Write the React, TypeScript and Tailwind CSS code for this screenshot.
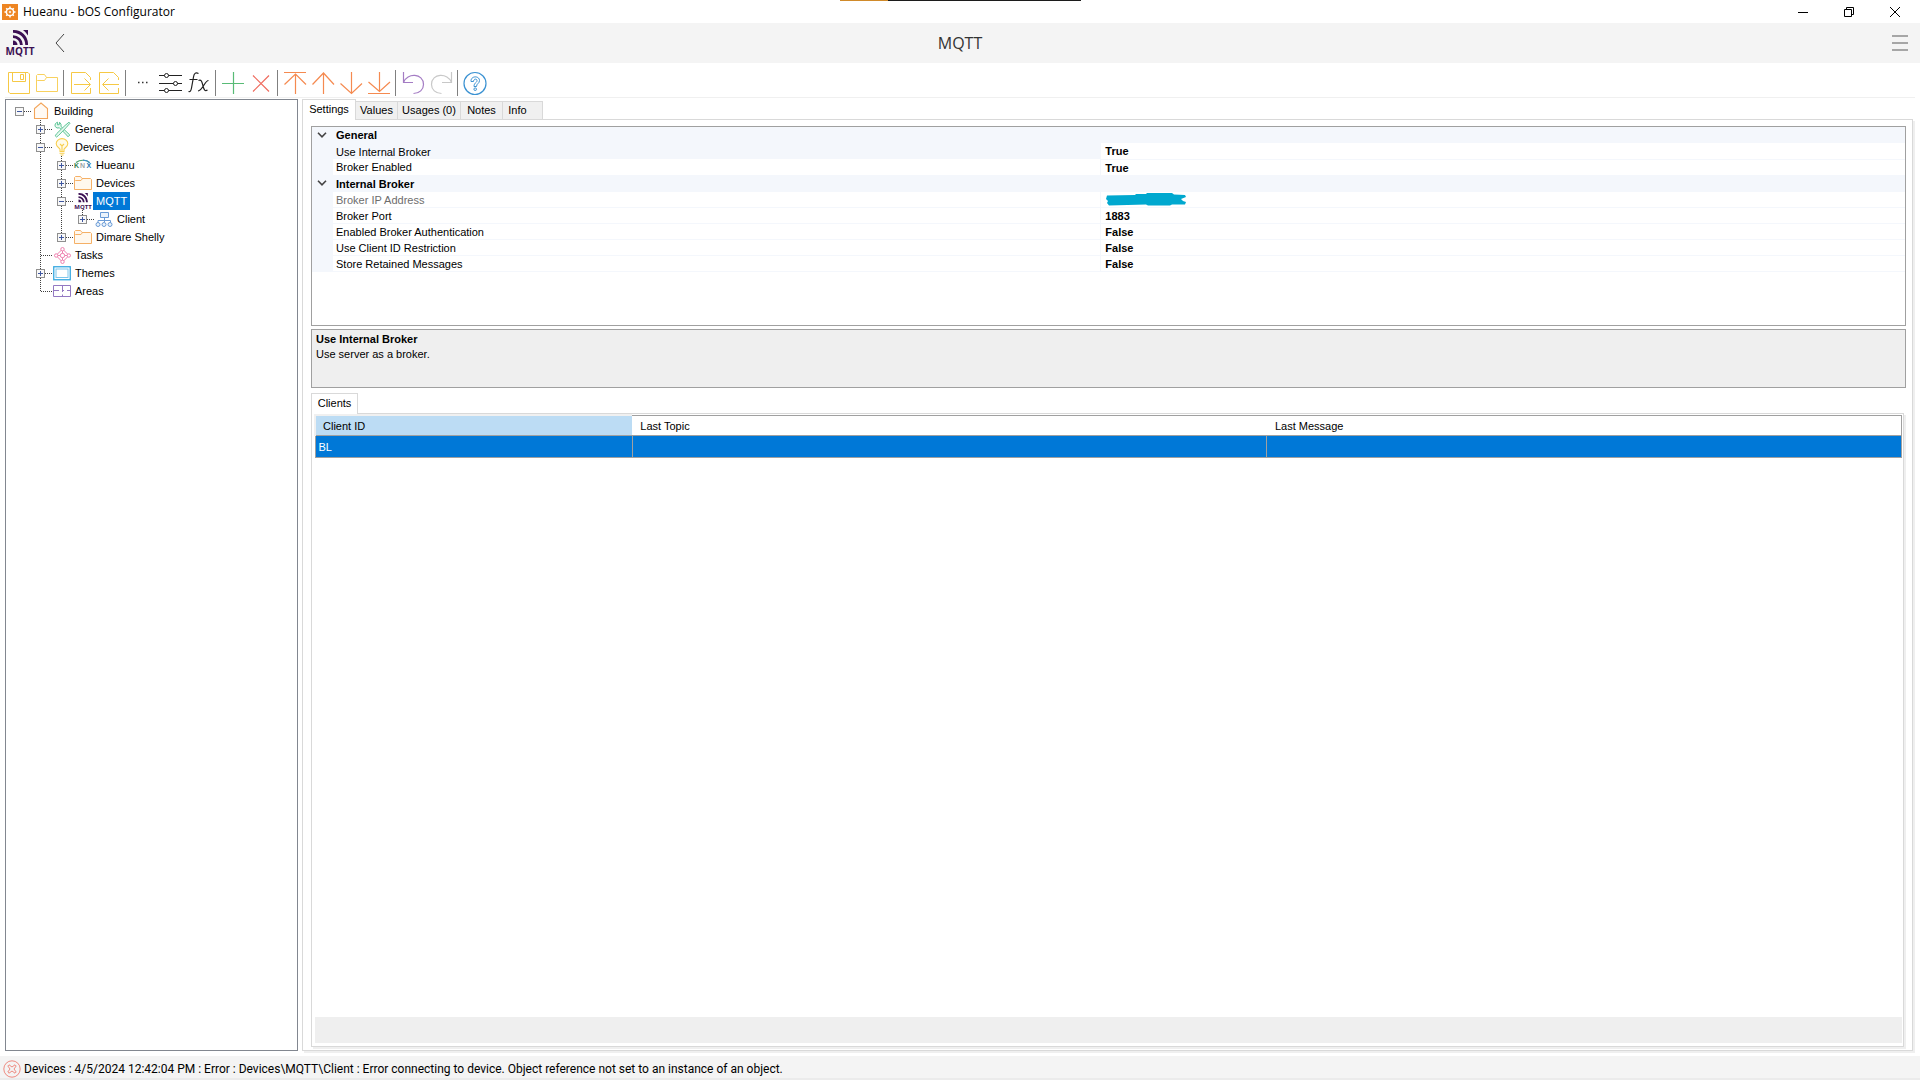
import React from "react";

type Link = "none" | "line" | "tee" | "ell" | "root";

type Node = {
  label: string;
  icon: React.ReactNode;
  links: Link[];
  box?: "+" | "-";
  selected?: boolean;
};

const MqttMark = () => (
  <g fill="#3c1053">
    <path d="M0 10.5A4.5 4.5 0 0 1 4.5 15H0z" />
    <path d="M0 5.2A9.8 9.8 0 0 1 9.8 15H7A7 7 0 0 0 0 8z" />
    <path d="M0 0H1A14 14 0 0 1 15 13.500V15H12.300A12.300 12.300 0 0 0 0 2.700z" />
    <path d="M10 0H15V5.500A18 18 0 0 0 10 0z" />
  </g>
);

const FolderIcon = () => (
  <svg viewBox="0 0 18 16" className="h-4 w-[18px]" fill="#fff8ee" stroke="#f5b066">
    <path d="M.5 14.500V2.500L1.500 1.500H6.500L8 3.500H16.500L17.500 4.500V14.500z" />
    <path d="M.5 6.500L1.500 5.500H7L8.500 3.500" fill="none" />
  </svg>
);

const HouseIcon = () => (
  <svg viewBox="0 0 16 18" className="h-[18px] w-4" fill="#fffaf4" stroke="#f3a55a" strokeWidth="1.1">
    <path d="M1.500 16.500V6.500L8 1L14.500 6.500V16.500z" />
  </svg>
);

const ToolsIcon = () => (
  <svg viewBox="0 0 17 17" className="size-[17px]" fill="#e9f8f0" stroke="#5cc596">
    <path d="M3.500 1.200A3.300 3.300 0 0 0 1.200 5.500L3 7L5.500 6.800L12.500 14L14 15.800L15.800 14L7 5.500L7 3.200L5.500 1.200L5.300 3.500L3.700 4z" />
    <path d="M15 1.200L16 2.200L12.500 6.200L4.500 14.500L2.500 16L1.200 14.800L2.800 12.500L11 4.500z" />
  </svg>
);

const BulbIcon = () => (
  <svg viewBox="0 0 14 18" className="h-[18px] w-3.5" fill="#fffbe9" stroke="#f8cf4f" strokeWidth="1.1">
    <path d="M5 13V11.500C5 10 1.200 9 1.200 5.800A5.800 5.200 0 0 1 12.800 5.800C12.800 9 9 10 9 11.500V13" />
    <path d="M4.500 13.500H9.500M4.500 15.200H9.500M5.500 17H8.500M5 6L7 8L9 6M7 8V13" />
  </svg>
);

const KnxIcon = () => (
  <svg viewBox="0 0 18 12" className="h-3 w-[18px]">
    <path d="M2 3.500C6 .5 12 .5 15.500 3.500" fill="none" stroke="#4aa06c" strokeWidth="1.200" />
    <path d="M9 1.200C12 1.200 14 2 15.800 3.800" fill="none" stroke="#3d8ecb" strokeWidth="1.200" />
    <g fontFamily="Liberation Sans, sans-serif" fontWeight="700" fontSize="7">
      <text x="0" y="9" fill="#37814f">K</text>
      <text x="6" y="9" fill="#9aa5a8">N</text>
      <text x="12.500" y="9" fill="#2676b0">X</text>
    </g>
  </svg>
);

const MqttIcon = () => (
  <svg viewBox="0 0 18 17" className="h-[17px] w-[18px]">
    <g transform="translate(4.500 0) scale(.62)">
      <MqttMark />
    </g>
    <text x="9" y="16" textAnchor="middle" fill="#3c1053" fontFamily="Open Sans, sans-serif" fontWeight="700" fontSize="6">
      MQTT
    </text>
  </svg>
);

const ClientIcon = () => (
  <svg viewBox="0 0 18 17" className="h-[17px] w-[18px]" fill="#eaf3fc" stroke="#6a9bd6">
    <path d="M5.500 1.500H13.500V6.500H5.500z" />
    <path d="M9.500 6.500V11M3 12V9.500H15.500V12" fill="none" />
    <circle cx="3" cy="13.500" r="2" />
    <circle cx="9" cy="13.500" r="2" />
    <circle cx="15" cy="13.500" r="2" />
  </svg>
);

const TasksIcon = () => (
  <svg viewBox="0 0 17 17" className="size-[17px]" fill="#fff" stroke="#ee7fae">
    <path d="M8.500 2L15 8.500L8.500 15L2 8.500z" fill="none" />
    <path d="M8.500 2V15M2 8.500H15" />
    <circle cx="8.500" cy="2.200" r="1.700" />
    <circle cx="8.500" cy="14.800" r="1.700" />
    <circle cx="2.200" cy="8.500" r="1.700" />
    <circle cx="14.800" cy="8.500" r="1.700" />
    <circle cx="8.500" cy="8.500" r="2.200" />
  </svg>
);

const ThemesIcon = () => (
  <svg viewBox="0 0 18 15" className="h-[15px] w-[18px]" fill="#fff">
    <rect x=".75" y=".75" width="16.500" height="13" stroke="#35a8e0" strokeWidth="1.300" />
    <rect x="3" y="3" width="12" height="8.500" stroke="#7cc6ec" />
  </svg>
);

const AreasIcon = () => (
  <svg viewBox="0 0 18 14" className="h-3.5 w-[18px]" fill="none" stroke="#9379c2">
    <path d="M.5 1.500H17.500V12.500H.5zM.5 6.500H6M9.500 1.500V8M9.500 10.500V12.500M9.500 6.500H11M14 6.500H17.500" />
  </svg>
);

const tree: Node[] = [
  { label: "Building", icon: <HouseIcon />, links: ["root"], box: "-" },
  { label: "General", icon: <ToolsIcon />, links: ["none", "tee"], box: "+" },
  { label: "Devices", icon: <BulbIcon />, links: ["none", "tee"], box: "-" },
  { label: "Hueanu", icon: <KnxIcon />, links: ["none", "line", "tee"], box: "+" },
  { label: "Devices", icon: <FolderIcon />, links: ["none", "line", "tee"], box: "+" },
  { label: "MQTT", icon: <MqttIcon />, links: ["none", "line", "tee"], box: "-", selected: true },
  { label: "Client", icon: <ClientIcon />, links: ["none", "line", "line", "ell"], box: "+" },
  { label: "Dimare Shelly", icon: <FolderIcon />, links: ["none", "line", "ell"], box: "+" },
  { label: "Tasks", icon: <TasksIcon />, links: ["none", "tee"] },
  { label: "Themes", icon: <ThemesIcon />, links: ["none", "tee"], box: "+" },
  { label: "Areas", icon: <AreasIcon />, links: ["none", "ell"] },
];

function Branch({ link, box }: { link: Link; box?: "+" | "-" }) {
  return (
    <svg viewBox="0 0 21 18" className="h-[18px] w-[21px] shrink-0" shapeRendering="crispEdges">
      <g stroke="#404040" strokeDasharray="1 1" fill="none">
        {(link === "line" || link === "tee") && <path d="M9.500 0V18" />}
        {link === "ell" && <path d="M9.500 0V9" />}
        {link !== "line" && link !== "none" && <path d="M10 9.500H21" />}
      </g>
      {box && (
        <g>
          <rect x="5.500" y="5.500" width="8" height="8" fill="#f8f8f8" stroke="#8f8f8f" />
          <path d={box === "+" ? "M7 9.500H12M9.500 7V12" : "M7 9.500H12"} stroke="#3f57a0" />
        </g>
      )}
    </svg>
  );
}

function Tree() {
  return (
    <ul className="w-[293px] shrink-0 border border-[#828790] bg-white pt-0.5 pl-1">
      {tree.map((node, i) => (
        <li key={i} className="flex h-[18px] items-center">
          {node.links.map((link, j) => (
            <Branch key={j} link={link} box={j === node.links.length - 1 ? node.box : undefined} />
          ))}
          <span className="flex w-5 shrink-0 justify-center">{node.icon}</span>
          <button
            className={
              node.selected
                ? "h-[18px] bg-[#0078d7] px-[3px] text-white"
                : "h-[18px] px-[3px]"
            }
          >
            {node.label}
          </button>
        </li>
      ))}
    </ul>
  );
}

const tools: { name: string; color: string; art: React.ReactNode }[][] = [
  [
    {
      name: "Save",
      color: "#f6c945",
      art: (
        <>
          <path d="M3.500 3.500H23L24.500 5V24.500H5L3.500 23z" />
          <path d="M7.500 3.500V12.500H20.500V3.500M15.500 5.500H18.500V10.500H15.500z" />
        </>
      ),
    },
    {
      name: "Open",
      color: "#f8d15e",
      art: <path d="M3.500 22.500V6.500L4.500 5.500H11.500L13.500 8.500H24.500V22.500zM3.500 12.500L4.500 11.500H11.500L13.500 8.500H24" />,
    },
  ],
  [
    {
      name: "Export",
      color: "#f6c945",
      art: <path d="M23.500 11V8.500L18.500 3.500H4.500V24.500H23.500V19M7 15.500H23M17.500 9.500L23.500 15.500L17.500 21.500" />,
    },
    {
      name: "Import",
      color: "#f6c945",
      art: <path d="M23.500 11V8.500L18.500 3.500H4.500V24.500H23.500V19M8 15.500H24M13.500 9.500L7.500 15.500L13.500 21.500" />,
    },
  ],
  [
    {
      name: "More",
      color: "#333",
      art: <path d="M9 13.500H10.500M13 13.500H14.500M17 13.500H18.500" strokeWidth="1.500" />,
    },
    {
      name: "Parameters",
      color: "#222",
      art: (
        <>
          <path d="M2 6.500H7.500M11.500 6.500H25M2 14.500H16.500M20.500 14.500H25M2 21.500H7.500M11.500 21.500H25" />
          <circle cx="9.500" cy="6.500" r="2" />
          <circle cx="18.500" cy="14.500" r="2" />
          <circle cx="9.500" cy="21.500" r="2" />
        </>
      ),
    },
    {
      name: "Function",
      color: "#222",
      art: (
        <g strokeWidth="1.200">
          <path d="M13.500 4.500C10.500 3 9 4.500 8.500 8L6.500 19C6 22 5 23 3.500 22.500M4.500 10.500H12.500" />
          <path d="M13.500 11.500C16.500 10 17 13 18 17C19 21 20 22.500 22.500 21M23.500 11.500C20 11.500 17.500 21.500 13 22" />
        </g>
      ),
    },
  ],
  [
    { name: "Add", color: "#58bb76", art: <path d="M14.500 3V25M3 14.500H25" strokeWidth="1.200" /> },
    { name: "Delete", color: "#ef6b5e", art: <path d="M6 6.500L22 22.500M22 6.500L6 22.500" strokeWidth="1.200" /> },
  ],
  [
    { name: "Move to top", color: "#f58a50", art: <path d="M3 3.500H25M14.500 5V25M3.500 15.500L14.500 5L25 15.500" strokeWidth="1.200" /> },
    { name: "Move up", color: "#f58a50", art: <path d="M14.500 4V25M3.500 15.500L14.500 4L25 15.500" strokeWidth="1.200" /> },
    { name: "Move down", color: "#f58a50", art: <path d="M14.500 3V24.500M3.500 14.500L14.500 24.500L25 14.500" strokeWidth="1.200" /> },
    { name: "Move to bottom", color: "#f58a50", art: <path d="M3 24.500H25M14.500 3V22.500M3.500 13L14.500 22.500L25 13" strokeWidth="1.200" /> },
  ],
  [
    { name: "Undo", color: "#a47cc4", art: <path d="M4.500 3V13.500H14M4.500 13.500C8 3.500 24.500 4 24.500 15.500C24.500 20.500 20.500 24.500 14.500 24.500" strokeWidth="1.200" /> },
    { name: "Redo", color: "#c8c8c8", art: <path d="M24.500 3V13.500H15M24.500 13.500C21 3.500 4.500 4 4.500 15.500C4.500 20.500 8.500 24.500 14.500 24.500" strokeWidth="1.200" /> },
  ],
  [
    {
      name: "Help",
      color: "#3b92d2",
      art: (
        <>
          <circle cx="14" cy="14.500" r="11" strokeWidth="1.200" />
          <path d="M10 12.500C9.500 6.500 18.500 6.500 18.500 11.500C18.500 14.500 15.500 14.500 15.500 17.500H13C13 13.500 16 14 16 11.500C16 9.500 12.500 9.500 12.500 12.500z" />
          <circle cx="14.200" cy="20.200" r="1.300" />
        </>
      ),
    },
  ],
];

function Toolbar() {
  return (
    <div className="mx-[5px] flex h-[35px] border-b border-[#f0f0f0] pt-1.5">
      {tools.map((group, i) => (
        <div key={i} className="flex">
          {i > 0 && <span className="mt-px mr-[3px] ml-0.5 h-[26px] w-px bg-[#808080]" />}
          {group.map((tool) => (
            <button key={tool.name} aria-label={tool.name} className="size-7">
              <svg viewBox="0 0 28 28" className="size-7" fill="none" stroke={tool.color}>
                {tool.art}
              </svg>
            </button>
          ))}
        </div>
      ))}
    </div>
  );
}

const tabs = ["Values", "Usages (0)", "Notes", "Info"];
const tabWidths = ["w-[42px]", "w-[63px]", "w-[42px]", "w-[40px]"];

const settings = [
  {
    title: "General",
    rows: [
      { name: "Use Internal Broker", value: "True", active: true },
      { name: "Broker Enabled", value: "True" },
    ],
  },
  {
    title: "Internal Broker",
    rows: [
      { name: "Broker IP Address", value: "", readOnly: true },
      { name: "Broker Port", value: "1883" },
      { name: "Enabled Broker Authentication", value: "False" },
      { name: "Use Client ID Restriction", value: "False" },
      { name: "Store Retained Messages", value: "False" },
    ],
  },
];

const Scribble = () => (
  <svg viewBox="0 0 80 13" className="h-[13px] w-20" fill="#00a8cf">
    <path d="M1 2.500L29 2L30 1L40 1L41 0H66L68 1.500L79 2L80 4L75 6L77 8L80 9L79 11.500L66 11.500L64 12.500H42L40 11.500L3 12.500L1 10L2 8L0 6z" />
  </svg>
);

function PropertyGrid() {
  return (
    <div className="h-[200px] border border-[#a0a0a0] bg-white">
      <table className="w-full table-fixed border-collapse text-left">
        <colgroup>
          <col className="w-[21px]" />
          <col className="w-[48.2%]" />
          <col />
        </colgroup>
        {settings.map((group) => (
          <tbody key={group.title}>
            <tr className="h-4 bg-[#f4f7fc]">
              <td>
                <svg viewBox="0 0 10 6" className="ml-[5px] h-1.5 w-2.5" fill="none" stroke="#444" strokeWidth="1.600">
                  <path d="M1 .8L5 4.800L9 .8" />
                </svg>
              </td>
              <th colSpan={2} className="pl-[3px] leading-4 font-bold">
                {group.title}
              </th>
            </tr>
            {group.rows.map((row) => (
              <tr key={row.name} className="h-4">
                <td className="bg-[#f4f7fc]" />
                <td
                  className={
                    row.active
                      ? "bg-[#f4f7fc] pt-0.5 pl-[3px] leading-[14px]"
                      : row.readOnly
                        ? "border-b border-[#f4f7fc] pt-0.5 pl-[3px] leading-[13px] text-[#6d6d6d]"
                        : "border-b border-[#f4f7fc] pt-0.5 pl-[3px] leading-[13px]"
                  }
                >
                  {row.name}
                </td>
                <td
                  className={
                    row.readOnly
                      ? "border-b border-l border-[#f4f7fc] pl-[5px]"
                      : "border-b border-l border-[#f4f7fc] pt-0.5 pl-1 leading-[13px] font-bold"
                  }
                >
                  {row.readOnly ? <Scribble /> : row.value}
                </td>
              </tr>
            ))}
          </tbody>
        ))}
      </table>
    </div>
  );
}

function Clients() {
  return (
    <div className="mt-[5px] flex grow flex-col">
      <div className="z-10 -mb-px flex">
        <button className="h-[21px] w-[47px] border border-b-0 border-[#d9d9d9] bg-white pb-0.5">Clients</button>
      </div>
      <div className="mr-0.5 flex grow flex-col border border-[#d9d9d9] bg-white pr-px pb-[3px] pl-0.5 shadow-[2px_2px_0_#efefef]">
        <table className="w-full table-fixed border-collapse border border-[#a0a0a0] text-left leading-4">
          <thead>
            <tr className="h-5">
              <th className="w-1/5 border-2 border-r-0 border-b-0 border-[#f0f0f0] bg-[#bcdcf4] pt-0.5 pl-[7px] font-normal">Client ID</th>
              <th className="w-2/5 pt-0.5 pl-2 font-normal">Last Topic</th>
              <th className="w-2/5 pt-0.5 pl-2 font-normal">Last Message</th>
            </tr>
          </thead>
          <tbody>
            <tr className="h-[22px] bg-[#0078d7] text-white">
              <td className="border border-[#a0a0a0] pt-0.5 pl-[3px]">BL</td>
              <td className="border border-[#a0a0a0]" />
              <td className="border border-[#a0a0a0]" />
            </tr>
          </tbody>
        </table>
        <div className="mt-auto ml-px h-[26px] bg-[#efefef]" />
      </div>
    </div>
  );
}

function Details() {
  return (
    <main className="ml-1 flex grow flex-col">
      <div className="z-10 -mb-px flex items-end">
        <button className="h-[21px] w-[54px] border border-b-0 border-[#d9d9d9] bg-white pb-0.5">Settings</button>
        {tabs.map((tab, i) => (
          <button
            key={tab}
            className={`${tabWidths[i]} h-[19px] border border-l-0 border-[#d9d9d9] bg-[#f0f0f0] ${tab === "Info" ? "pr-2.5" : ""}`}
          >
            {tab}
          </button>
        ))}
      </div>
      <div className="mr-[7px] flex grow flex-col border border-[#d9d9d9] bg-white pt-1.5 pr-1.5 pb-[3px] pl-2 shadow-[2px_2px_0_#efefef]">
        <PropertyGrid />
        <div className="mt-[3px] h-[59px] border border-[#a0a0a0] bg-[#efefef] px-1 pt-0.5">
          <h2 className="leading-[15px] font-bold">Use Internal Broker</h2>
          <p className="leading-[15px]">Use server as a broker.</p>
        </div>
        <Clients />
      </div>
    </main>
  );
}

function TitleBar() {
  return (
    <header className="relative flex h-[23px] items-center bg-white pl-0.5 font-['Open_Sans',sans-serif] text-[12px]">
      <div className="absolute top-0 left-[840px] flex h-px w-[241px] bg-[#1c1c1c]">
        <span className="w-12 bg-[#d08a2a]" />
      </div>
      <svg viewBox="0 0 16 16" className="size-4">
        <rect width="16" height="16" fill="#ee8522" />
        <g stroke="#fff" fill="none">
          <circle cx="8" cy="8" r="3.600" strokeWidth="1.500" />
          <path d="M8 2.500V4.500M8 11.500V13.500M2.500 8H4.500M11.500 8H13.500M4.200 4.200L5.500 5.500M10.500 10.500L11.800 11.800M4.200 11.800L5.500 10.500M10.500 5.500L11.800 4.200" strokeWidth="1.500" />
          <circle cx="8" cy="8" r=".8" />
        </g>
      </svg>
      <h1 className="ml-[5px]">Hueanu - bOS Configurator</h1>
      <div className="mr-0.5 ml-auto flex">
        <button aria-label="Minimize" className="flex w-[46px] justify-center">
          <svg viewBox="0 0 10 10" className="size-2.5" stroke="#000">
            <path d="M0 5.500H10" />
          </svg>
        </button>
        <button aria-label="Restore" className="flex w-[46px] justify-center">
          <svg viewBox="0 0 10 10" className="size-2.5" stroke="#000" fill="none">
            <path d="M.5 2.500H7.500V9.500H.5zM2.500 2.500V.5H9.500V7.500H7.500" />
          </svg>
        </button>
        <button aria-label="Close" className="flex w-[46px] justify-center">
          <svg viewBox="0 0 10 10" className="size-2.5" stroke="#000">
            <path d="M0 0L10 10M10 0L0 10" />
          </svg>
        </button>
      </div>
    </header>
  );
}

function NavBar() {
  return (
    <div className="grid h-10 grid-cols-[1fr_auto_1fr] items-center bg-[#f4f4f4]">
      <div className="flex items-center pl-[5px]">
        <svg viewBox="0 0 30 28" className="h-7 w-[30px]">
          <g transform="translate(8 1)">
            <MqttMark />
          </g>
          <text x="15" y="26" textAnchor="middle" fill="#3c1053" fontFamily="Open Sans, sans-serif" fontWeight="700" fontSize="10">
            MQTT
          </text>
        </svg>
        <button aria-label="Back" className="ml-5">
          <svg viewBox="0 0 10 20" className="h-5 w-2.5" fill="none" stroke="#444">
            <path d="M9 1L1 10L9 19" />
          </svg>
        </button>
      </div>
      <h2 className="font-['Open_Sans',sans-serif] text-[16px] text-[#333]">MQTT</h2>
      <div className="flex justify-end pr-3">
        <button aria-label="Menu">
          <svg viewBox="0 0 16 16" className="size-4" stroke="#8c8c8c" strokeWidth="1.500">
            <path d="M0 1H16M0 8H16M0 15H16" />
          </svg>
        </button>
      </div>
    </div>
  );
}

function StatusBar() {
  return (
    <footer className="mt-[5px] flex h-6 items-center border-b-2 border-[#ebebeb] bg-[#f4f4f4] pt-1 pl-[3px] font-[Roboto,sans-serif] text-[12px]">
      <svg viewBox="0 0 18 18" className="size-[18px]" fill="none" stroke="#ee8a80">
        <circle cx="9" cy="9" r="8.200" />
        <path d="M6 4.800L9 7L12 4.800L13.200 6L11 9L13.200 12L12 13.200L9 11L6 13.200L4.800 12L7 9L4.800 6z" />
      </svg>
      <p className="ml-[3px]">
        Devices : 4/5/2024 12:42:04 PM : Error : Devices\MQTT\Client : Error connecting to device. Object reference not set to an instance of an object.
      </p>
    </footer>
  );
}

export default function App() {
  return (
    <div className="flex min-h-screen flex-col bg-white font-['Liberation_Sans',sans-serif] text-[11px] text-black">
      <TitleBar />
      <NavBar />
      <Toolbar />
      <div className="mt-px flex grow pl-[5px]">
        <Tree />
        <Details />
      </div>
      <StatusBar />
    </div>
  );
}
